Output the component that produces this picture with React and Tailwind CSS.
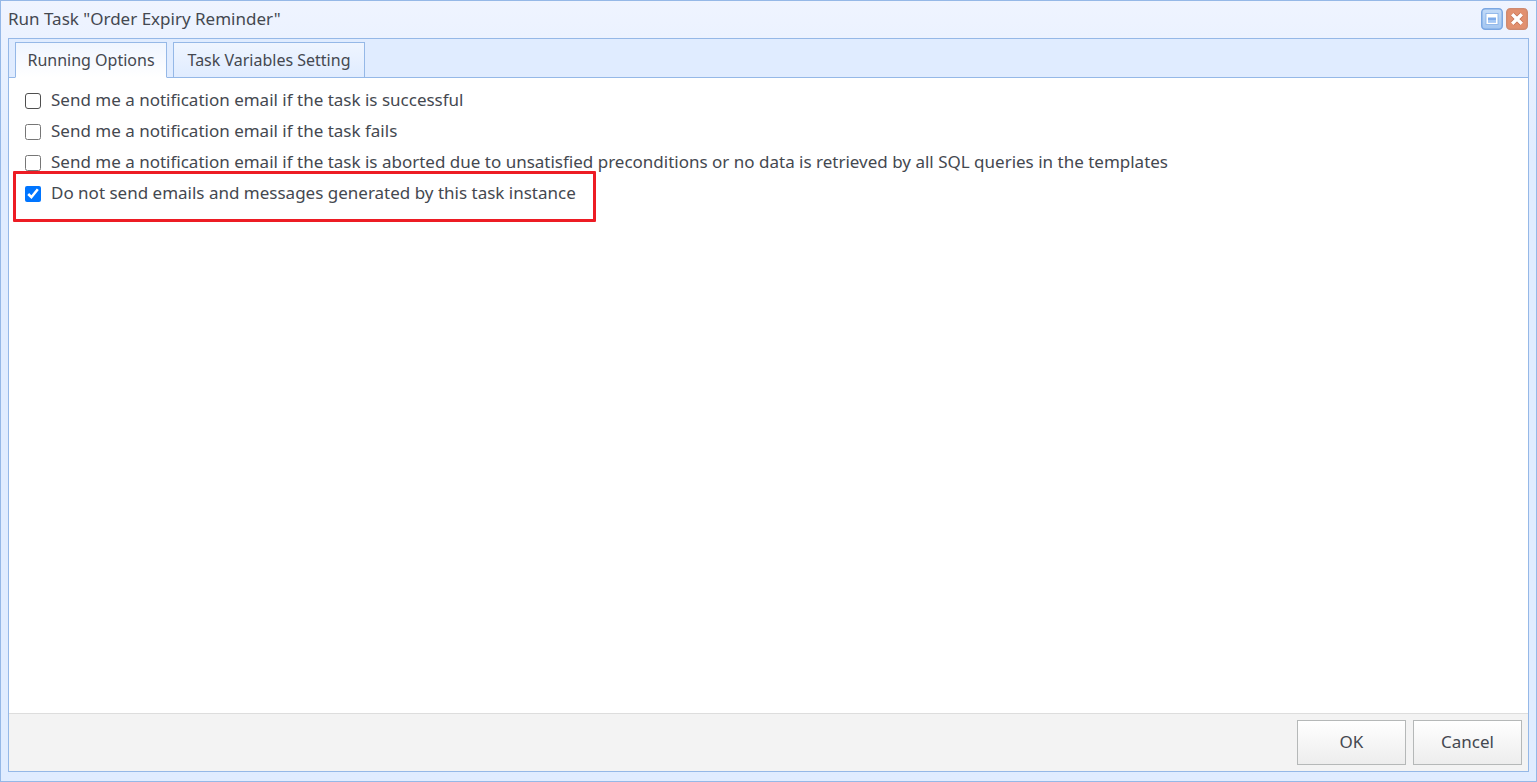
import React, { useState } from 'react';

const tabs = [
    { title: 'Running Options', width: 'w-[152px]' },
    { title: 'Task Variables Setting', width: 'w-[192px]' },
];

const initialOptions = [
    { id: 'notify-success', label: 'Send me a notification email if the task is successful', checked: false, focused: true },
    { id: 'notify-fail', label: 'Send me a notification email if the task fails', checked: false },
    { id: 'notify-abort', label: 'Send me a notification email if the task is aborted due to unsatisfied preconditions or no data is retrieved by all SQL queries in the templates', checked: false },
    { id: 'no-messages', label: 'Do not send emails and messages generated by this task instance', checked: true, highlighted: true },
];

const MaximizeIcon = () => (
    <svg width="22" height="22" viewBox="0 0 22 22" aria-hidden="true">
        <defs>
            <linearGradient id="maxFill" x1="0" y1="0" x2="0" y2="1">
                <stop offset="0" stopColor="#c3dbf8" />
                <stop offset="1" stopColor="#a3c6f1" />
            </linearGradient>
        </defs>
        <rect x="0.75" y="0.75" width="20.5" height="20.5" rx="3.5" fill="url(#maxFill)" stroke="#7ba7e2" strokeWidth="1.5" />
        <rect x="5" y="5.5" width="12" height="11" fill="#fff" stroke="#83aee6" strokeWidth="0.8" />
        <rect x="7" y="9.5" width="8" height="5" fill="#7eabea" />
        <rect x="7" y="12" width="8" height="2.5" fill="#a5c8f5" />
    </svg>
);

const CloseIcon = () => (
    <svg width="22" height="22" viewBox="0 0 22 22" aria-hidden="true">
        <rect x="0.75" y="0.75" width="20.5" height="20.5" rx="3.5" fill="#e2906f" stroke="#cf8a70" strokeWidth="1.5" />
        <path d="M6.2 6.2 15.8 15.8M15.8 6.2 6.2 15.8" stroke="#c46f52" strokeWidth="4.8" />
        <path d="M6.2 6.2 15.8 15.8M15.8 6.2 6.2 15.8" stroke="#fff" strokeWidth="3.4" />
    </svg>
);

const OptionRow = ({ option, onToggle }) => (
    <div className="relative flex w-fit items-center h-[31px]">
        <input
            id={option.id}
            type="checkbox"
            checked={option.checked}
            onChange={() => onToggle(option.id)}
            className={`m-0 size-4 shrink-0 accent-[#0075ff] ${option.focused ? 'appearance-none rounded-[3px] border border-[#4f4f4f] bg-white checked:appearance-auto' : ''}`}
        />
        <label htmlFor={option.id} className="pb-[2px] pl-[10px]">{option.label}</label>
        {option.highlighted && (
            <div className="pointer-events-none absolute -left-3 -right-5 -top-[7px] -bottom-[13px] rounded-[1px] border-3 border-[#ed1c24]"></div>
        )}
    </div>
);

const DialogButton = ({ children }) => (
    <button type="button" className="h-[45px] w-[109px] border border-[#b5b8b8] bg-linear-to-b from-white to-[#ededed] pb-[2px]">
        {children}
    </button>
);

export default function App() {
    const [activeTab, setActiveTab] = useState(0);
    const [options, setOptions] = useState(initialOptions);

    const toggle = (id) => setOptions(options.map((o) => (o.id === id ? { ...o, checked: !o.checked } : o)));

    return (
        <div className="flex min-h-screen flex-col border border-[#95b8e7] bg-linear-to-b from-[#eff4ff] to-[#e0ecff] to-20% px-[7px] pb-[9px] font-['Noto_Sans',sans-serif] text-[17px] text-[#444850]">
            {/* Title bar */}
            <header className="flex h-[37px] items-center justify-between pr-px pb-px">
                <h1>Run Task "Order Expiry Reminder"</h1>
                <div className="flex gap-[3px]">
                    <button type="button" aria-label="Maximize"><MaximizeIcon /></button>
                    <button type="button" aria-label="Close"><CloseIcon /></button>
                </div>
            </header>

            <main className="flex flex-1 flex-col border border-[#95b8e7] bg-white">
                {/* Tabs */}
                <div role="tablist" className="flex h-[39px] items-end gap-[6px] border-b border-[#95b8e7] bg-[#e0ecff] pl-[6px]">
                    {tabs.map((tab, i) => (
                        <button
                            key={tab.title}
                            type="button"
                            role="tab"
                            aria-selected={activeTab === i}
                            onClick={() => setActiveTab(i)}
                            className={`-mb-px h-9 whitespace-nowrap border border-[#95b8e7] bg-linear-to-b text-base ${tab.width} ${activeTab === i ? 'border-b-white from-[#eff5ff] to-white' : 'from-[#eff5ff] to-[#e0ecff]'}`}
                        >
                            {tab.title}
                        </button>
                    ))}
                </div>

                {/* Options */}
                <div className="flex-1 px-4 pt-[7px]">
                    {activeTab === 0 && options.map((option) => (
                        <OptionRow key={option.id} option={option} onToggle={toggle} />
                    ))}
                </div>

                {/* Footer */}
                <footer className="flex justify-end gap-[7px] border-t border-[#dddddd] bg-[#f3f3f3] p-[6px]">
                    <DialogButton>OK</DialogButton>
                    <DialogButton>Cancel</DialogButton>
                </footer>
            </main>
        </div>
    );
}
